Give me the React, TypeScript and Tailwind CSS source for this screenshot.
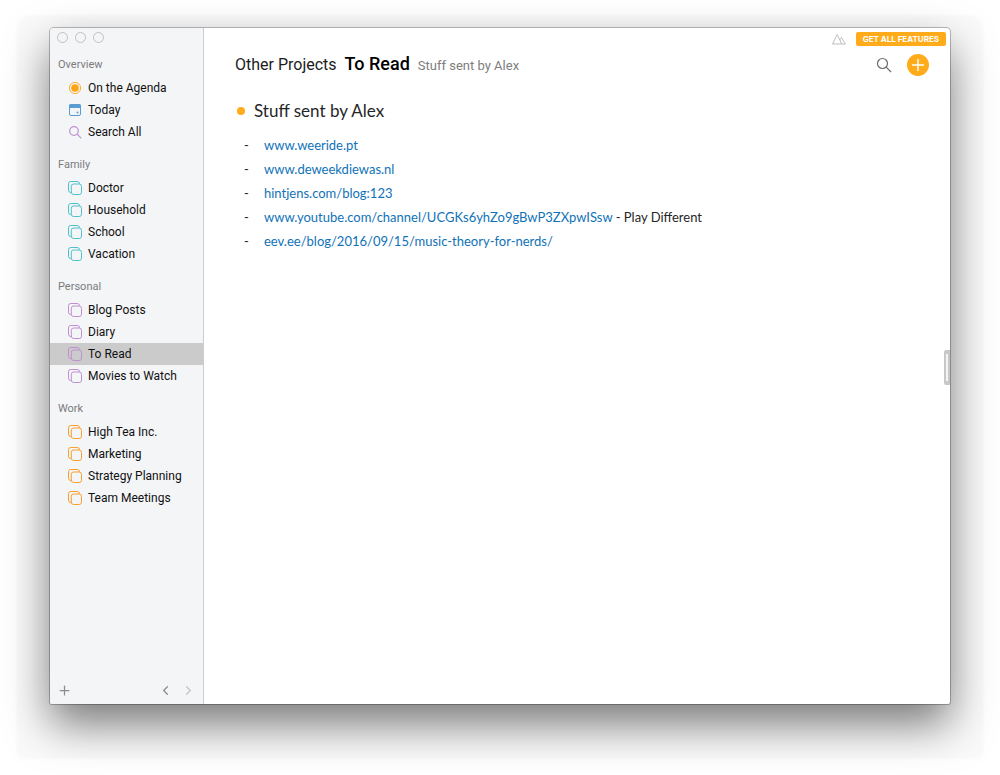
import { ChevronLeft, ChevronRight, Plus } from 'lucide-react';

type Item = { label: string; icon?: 'agenda' | 'today' | 'search' };
type Section = { title: string; color: string; items: Item[] };

const SECTIONS: Section[] = [
  {
    title: 'Overview',
    color: '',
    items: [
      { label: 'On the Agenda', icon: 'agenda' },
      { label: 'Today', icon: 'today' },
      { label: 'Search All', icon: 'search' },
    ],
  },
  {
    title: 'Family',
    color: 'text-[#4fc0cb]',
    items: [{ label: 'Doctor' }, { label: 'Household' }, { label: 'School' }, { label: 'Vacation' }],
  },
  {
    title: 'Personal',
    color: 'text-[#bf8fd2]',
    items: [{ label: 'Blog Posts' }, { label: 'Diary' }, { label: 'To Read' }, { label: 'Movies to Watch' }],
  },
  {
    title: 'Work',
    color: 'text-[#fb9f2c]',
    items: [{ label: 'High Tea Inc.' }, { label: 'Marketing' }, { label: 'Strategy Planning' }, { label: 'Team Meetings' }],
  },
];

const LINKS = [
  { text: 'www.weeride.pt' },
  { text: 'www.deweekdiewas.nl' },
  { text: 'hintjens.com/blog:123' },
  { text: 'www.youtube.com/channel/UCGKs6yhZo9gBwP3ZXpwISsw', note: ' - Play Different' },
  { text: 'eev.ee/blog/2016/09/15/music-theory-for-nerds/' },
];

function ItemIcon({ icon }: { icon?: Item['icon'] }) {
  if (icon === 'agenda') {
    return (
      <svg width="14" height="14" viewBox="0 0 14 14" fill="none">
        <circle cx="7" cy="7" r="5.6" stroke="#fdb02a" />
        <circle cx="7" cy="7" r="3.8" fill="#fda50f" />
      </svg>
    );
  }
  if (icon === 'today') {
    return (
      <svg width="14" height="14" viewBox="0 0 14 14" fill="none">
        <rect x="1.5" y="1.5" width="11" height="11" rx="1.5" stroke="#5b9bd3" />
        <path d="M1 5V3a2 2 0 0 1 2-2h8a2 2 0 0 1 2 2v2z" fill="#5b9bd3" />
        <circle cx="9.5" cy="9.5" r="1" fill="#5b9bd3" />
      </svg>
    );
  }
  if (icon === 'search') {
    return (
      <svg width="14" height="14" viewBox="0 0 14 14" fill="none" stroke="#bf8fd2" strokeWidth="1.2">
        <circle cx="6" cy="6" r="4.3" />
        <path d="M9.2 9.2l3.6 3.6" strokeLinecap="round" />
      </svg>
    );
  }
  return (
    <svg width="14" height="14" viewBox="0 0 14 14" fill="none" stroke="currentColor">
      <path d="M3.5 11.5H2.8A2.3 2.3 0 0 1 .5 9.2V2.8A2.3 2.3 0 0 1 2.8.5h6.400a2.300 2.300 0 0 1 2.300 2.300v.2" />
      <rect x="3.300" y="3" width="10.200" height="10.500" rx="2.300" />
    </svg>
  );
}

function Sidebar() {
  return (
    <aside className="flex w-[154px] shrink-0 flex-col border-r border-[#cbcdd0] bg-[#f4f5f7]">
      <div className="flex gap-[7px] px-[7px] pt-1">
        <button aria-label="Close" className="size-[11px] rounded-full border border-[#bfc0c2]" />
        <button aria-label="Minimize" className="size-[11px] rounded-full border border-[#bfc0c2]" />
        <button aria-label="Zoom" className="size-[11px] rounded-full border border-[#bfc0c2]" />
      </div>

      <nav className="mt-[10px] flex flex-col gap-[10px]">
        {SECTIONS.map((section) => (
          <section key={section.title}>
            <h2 className="pt-px pb-px pl-2 text-[11px] leading-[22px] text-[#7b7c7e]">{section.title}</h2>
            <ul>
              {section.items.map((item) => (
                <li key={item.label}>
                  <button
                    className={`flex h-[22px] w-full items-center gap-[6px] pl-[18px] text-left text-[12px] whitespace-nowrap text-[#111] ${
                      item.label === 'To Read' ? 'bg-[#cbcbcb]' : ''
                    }`}
                  >
                    <span className={section.color}>
                      <ItemIcon icon={item.icon} />
                    </span>
                    {item.label}
                  </button>
                </li>
              ))}
            </ul>
          </section>
        ))}
      </nav>

      <div className="mt-auto flex items-center px-[7px] pb-[6px] text-[#8b8c8e]">
        <button aria-label="Add category">
          <Plus size={15} strokeWidth={2} />
        </button>
        <button aria-label="Back" className="ml-auto">
          <ChevronLeft size={15} strokeWidth={2} />
        </button>
        <button aria-label="Forward" className="ml-2 text-[#c3c4c6]">
          <ChevronRight size={15} strokeWidth={2} />
        </button>
      </div>
    </aside>
  );
}

function Header() {
  return (
    <header className="pr-1 pl-[31px]">
      <div className="flex items-center justify-end gap-[10px] pt-1">
        <svg width="14" height="12" viewBox="0 0 14 12" fill="none" stroke="#bdbdbd" strokeLinejoin="round">
          <path d="M.5 11L5.200 1.500 9.800 11z" />
          <path d="M7.800 6.800L9.500 4.500 13.300 11H9.800" />
        </svg>
        <button className="h-[14px] rounded-[2px] bg-[#ffab1a] px-[7px] font-['Inter',sans-serif] text-[8px] leading-[14px] font-bold text-white">
          GET ALL FEATURES
        </button>
      </div>
      <div className="flex h-[38px] items-center pr-[17px]">
        <h1 className="flex items-baseline gap-2 pb-1 text-[16px] text-[#1c1c1c]">
          <span>Other Projects</span>
          <span className="text-[18px] font-medium text-black">To Read</span>
          <span className="text-[13px] text-[#7d7d7d]">Stuff sent by Alex</span>
        </h1>
        <button aria-label="Search" className="ml-auto">
          <svg width="16" height="16" viewBox="0 0 16 16" fill="none" stroke="#6c6c6c" strokeWidth="1.2">
            <circle cx="6.500" cy="6.500" r="5" />
            <path d="M10.200 10.200l4.800 4.800" />
          </svg>
        </button>
        <button aria-label="New note" className="ml-[15px] flex size-[22px] items-center justify-center rounded-full bg-[#ffab1a]">
          <svg width="12" height="12" viewBox="0 0 12 12" stroke="#fff" strokeWidth="1.500">
            <path d="M6 0v12M0 6h12" />
          </svg>
        </button>
      </div>
    </header>
  );
}

function Note() {
  return (
    <article className="pt-[15px] pl-[33px] font-['Lato','Noto_Sans',sans-serif]">
      <h2 className="flex items-center gap-[9px] text-[17px] leading-6 text-[#262626]">
        <span className="size-2 rounded-full bg-[#ffab1a]" />
        Stuff sent by Alex
      </h2>
      <ul className="mt-[10px] text-[13px] leading-6 text-[#262626]">
        {LINKS.map((link) => (
          <li key={link.text} className="flex pl-[7px]">
            <span className="w-5">-</span>
            <span>
              <a href="#" className="text-[#0f72b8]">
                {link.text}
              </a>
              {link.note}
            </span>
          </li>
        ))}
      </ul>
    </article>
  );
}

export default function App() {
  return (
    <div className="flex min-h-screen bg-white px-[50px] pt-7 pb-[71px] font-['Roboto','Noto_Sans',sans-serif]">
      <div className="relative flex flex-1 overflow-hidden rounded-t-[4px] rounded-b-[2px] bg-white shadow-[0_0_0_1px_rgba(0,0,0,0.25),0_20px_44px_rgba(0,0,0,0.52),0_21px_2px_34px_rgba(0,0,0,0.02)]">
        <Sidebar />
        <main className="min-w-0 flex-1">
          <Header />
          <Note />
        </main>
        {/* drawer handle on the right edge */}
        <button
          aria-label="Show panel"
          className="absolute top-[322px] right-0 h-[35px] w-[6px] rounded-l-[2px] border-x-2 border-y-4 border-[#c8c8c8] bg-[#f4f4f4]"
        />
      </div>
    </div>
  );
}
